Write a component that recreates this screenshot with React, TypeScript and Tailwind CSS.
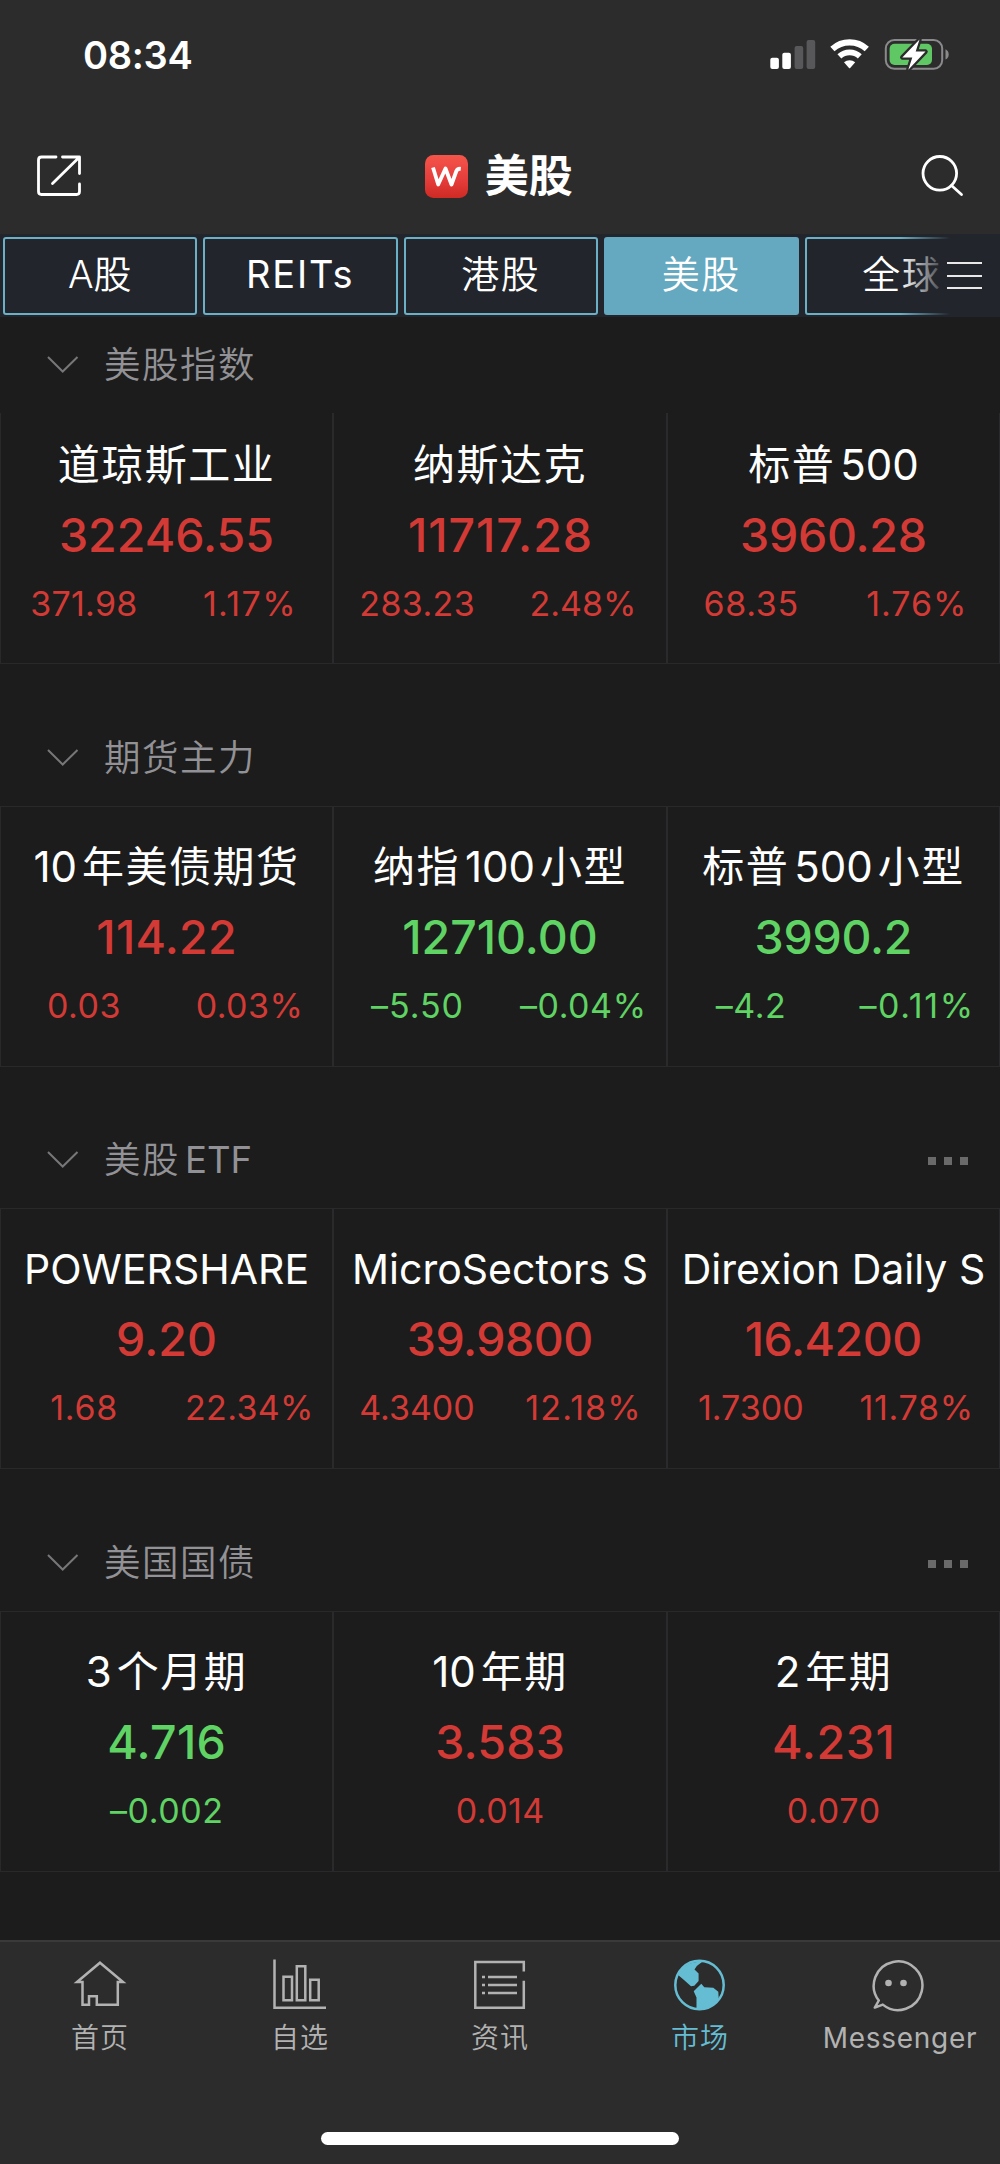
import type { ReactNode } from 'react';

type Figure = [text: string, tracking: number];
type Quote = { name: string; price: Figure; change: Figure; percent?: Figure; up: boolean };
type Group = { title: string; more?: boolean; quotes: Quote[] };

const groups: Group[] = [
  {
    title: '美股指数',
    quotes: [
      { name: '道琼斯工业', price: ['32246.55', 0], change: ['371.98', 0.26], percent: ['1.17%', 1.39], up: true },
      { name: '纳斯达克', price: ['11717.28', 1], change: ['283.23', 0.35], percent: ['2.48%', 0], up: true },
      { name: '标普500', price: ['3960.28', -0.26], change: ['68.35', 0.69], percent: ['1.76%', 0.94], up: true },
    ],
  },
  {
    title: '期货主力',
    quotes: [
      { name: '10年美债期货', price: ['114.22', 0.28], change: ['0.03', 0.44], percent: ['0.03%', 0.43], up: true },
      { name: '纳指100小型', price: ['12710.00', 0], change: ['–5.50', 0.99], percent: ['–0.04%', 0.55], up: false },
      { name: '标普500小型', price: ['3990.2', -0.26], change: ['–4.2', 0.56], percent: ['–0.11%', 1.64], up: false },
    ],
  },
  {
    title: '美股ETF',
    more: true,
    quotes: [
      { name: 'POWERSHARE', price: ['9.20', 0], change: ['1.68', 0.72], percent: ['22.34%', 0.34], up: true },
      { name: 'MicroSectors S', price: ['39.9800', -0.53], change: ['4.3400', 0], percent: ['12.18%', 1.14], up: true },
      { name: 'Direxion Daily S', price: ['16.4200', -0.51], change: ['1.7300', 0], percent: ['11.78%', 0.71], up: true },
    ],
  },
  {
    title: '美国国债',
    more: true,
    quotes: [
      { name: '3个月期', price: ['4.716', 0.31], change: ['–0.002', 0.58], up: false },
      { name: '10年期', price: ['3.583', 0.2], change: ['0.014', 0.43], up: true },
      { name: '2年期', price: ['4.231', 0.66], change: ['0.070', 0.75], up: true },
    ],
  },
];

/** Chinese runs get a little tracking, latin runs a thin gap on each side that touches Chinese. */
function MixedText({ text }: { text: string }) {
  const runs = text.match(/[\u4e00-\u9fff]+|[^\u4e00-\u9fff]+/g) ?? [];
  return (
    <>
      {runs.map((run, i) =>
        /[\u4e00-\u9fff]/.test(run) ? (
          <span key={i} className="tracking-[1.5px]">{run}</span>
        ) : (
          <span key={i} className={'font-normal ' + (i > 0 ? 'ml-[5px] ' : '') + (i < runs.length - 1 ? 'mr-[5px]' : '')}>{run}</span>
        ),
      )}
    </>
  );
}

function Num({ value }: { value: Figure }) {
  return <span style={{ letterSpacing: value[1], marginRight: -value[1] }}>{value[0]}</span>;
}

function StatusBar() {
  return (
    <div className="flex h-[110px] items-center justify-between pr-[50px] pl-[83px]">
      <span className="text-[38px] leading-none font-semibold tracking-[-0.3px]">08:34</span>
      <svg width="180" height="40" viewBox="770 35 180 40" fill="none">
        <rect x="770.3" y="57.7" width="8.6" height="11.3" rx="2" fill="#fff" />
        <rect x="782.3" y="52.7" width="8.6" height="16.3" rx="2" fill="#fff" />
        <rect x="794.6" y="46" width="8.6" height="23" rx="2" fill="#58585a" />
        <rect x="806.6" y="40" width="8.6" height="29" rx="2" fill="#58585a" />
        <path d="M832.4 49.2a25.6 25.6 0 0 1 34.4 0" stroke="#fff" strokeWidth="6.2" transform="translate(0 -.2)" />
        <path d="M839.4 56.8a15.2 15.2 0 0 1 20.4 0" stroke="#fff" strokeWidth="5.8" transform="translate(0 -.4)" />
        <path d="M844 62.3a8.6 8.6 0 0 1 11.2 0l-5 5.7q-.6.6-1.2 0z" fill="#fff" />
        <rect x="885.8" y="40" width="56.4" height="28.8" rx="8.5" stroke="#8a8a8c" strokeWidth="2" />
        <path d="M945.5 49.3q3.2 1.6 3.2 5.1t-3.2 5.1z" fill="#8a8a8c" />
        <rect x="889.6" y="43.8" width="42.4" height="21.2" rx="5" fill="#5fc763" />
        <path
          d="M919.5 39.6 902.3 57.4h10l-4 12.4 17.2-18.2h-9.8z"
          fill="#fff"
          stroke="#2c2c2c"
          strokeWidth="4.5"
          strokeLinejoin="round"
          paintOrder="stroke"
        />
      </svg>
    </div>
  );
}

function TitleBar() {
  return (
    <div className="flex h-[124px] items-center justify-between px-[36px] pt-[8px]">
      <svg width="47" height="44" viewBox="36 154 47 44" fill="none" stroke="#fff" strokeWidth="2.8" strokeLinecap="round" strokeLinejoin="round">
        <path d="M56 157H41.5q-3 0-3 3v31.5q0 3 3 3H76.5q3 0 3-3V184" />
        <path d="M62.5 157H79.5V173.5M52.5 183.5 79 157.5" />
      </svg>
      <div className="ml-[-5px] flex items-center gap-[16.5px]">
        <svg width="43" height="43" viewBox="0 0 43 43" fill="none">
          <defs>
            <linearGradient id="badge" x1="0" y1="0" x2="0" y2="1">
              <stop offset="0" stopColor="#f4554a" />
              <stop offset="0.6" stopColor="#e43c3a" />
              <stop offset="1" stopColor="#cf2a24" />
            </linearGradient>
          </defs>
          <rect width="43" height="43" rx="8.5" fill="url(#badge)" />
          <path d="M8 12.5 13.200 29.500 20.500 13.500 26.500 29.500 31.200 16.500Q32.200 13.500 35.800 13.800" stroke="#fff" strokeWidth="3.800" strokeLinejoin="round" />
        </svg>
        <h1 className="text-[44px] leading-none font-semibold">美股</h1>
      </div>
      <svg width="44" height="44" viewBox="919 154 44 44" fill="none" stroke="#fff" strokeWidth="2.8" strokeLinecap="round">
        <circle cx="938.8" cy="173.3" r="16.8" />
        <path d="M950.5 185.5 960.5 194.5" />
      </svg>
    </div>
  );
}

function MarketTabs() {
  const tabs = ['A股', 'REITs', '港股', '美股', '全球'];
  return (
    <div className="relative flex h-[83px] gap-[6px] overflow-hidden bg-[#22252c] pt-[3px] pl-[2.5px]">
      {tabs.map((tab) => (
        <div
          key={tab}
          className={
            'flex h-[78px] w-[194.5px] shrink-0 items-center justify-center rounded-[3px] border-[2.5px] pb-[4px] text-[38px] whitespace-nowrap ' +
            (tab === '美股' ? 'border-[#64a9c0] bg-[#64a9c0]' : 'border-[#6cb0c6] bg-[#22252c]')
          }
        >
          <span className={tab === 'REITs' ? 'tracking-[1.8px]' : tab === 'A股' ? 'font-[350]' : 'font-[350] tracking-[1.5px]'}>{tab}</span>
        </div>
      ))}
      <div className="absolute inset-y-0 right-0 flex w-[100px] items-center justify-end bg-linear-to-r from-[#22252c]/0 to-[#22252c] to-50% pr-[18px]">
        <div className="flex w-[35px] flex-col gap-[10.5px]">
          <i className="h-[2px] bg-[#e8e8e8]" />
          <i className="h-[2px] bg-[#e8e8e8]" />
          <i className="h-[2px] bg-[#e8e8e8]" />
        </div>
      </div>
    </div>
  );
}

function GroupHeader({ title, more }: { title: string; more?: boolean }) {
  return (
    <div className="flex h-[96px] items-center pr-[32px] pl-[47px]">
      <svg width="32" height="18" viewBox="0 0 32 18" fill="none" stroke="#77777a" strokeWidth="2">
        <path d="M1 1 15.7 15.5 30.5 1" />
      </svg>
      <h2 className="ml-[25px] text-[36.5px] leading-none font-[350] text-[#929296]">
        <MixedText text={title} />
      </h2>
      {more && (
        <div className="mt-[2px] ml-auto flex gap-[8px]">
          <i className="size-[8px] bg-[#6a6a6b]" />
          <i className="size-[8px] bg-[#6a6a6b]" />
          <i className="size-[8px] bg-[#6a6a6b]" />
        </div>
      )}
    </div>
  );
}

function QuoteCell({ quote, latin }: { quote: Quote; latin: boolean }) {
  return (
    <div className="overflow-hidden border-r-2 border-[#2a2a2c] text-center whitespace-nowrap last:border-r">
      <div className={'h-[60px] leading-[60px] text-white ' + (latin ? 'text-[41px]' : 'text-[42px]')}>
        <MixedText text={quote.name} />
      </div>
      <div className={quote.up ? 'text-[#d33a35]' : 'text-[#5fd363]'}>
        <div className="h-[80px] text-[46.5px] leading-[80px] font-medium">
          <Num value={quote.price} />
        </div>
        <div className="flex h-[58px] text-[34px] leading-[58px]">
          <div className="flex-1"><Num value={quote.change} /></div>
          {quote.percent && <div className="flex-1"><Num value={quote.percent} /></div>}
        </div>
      </div>
    </div>
  );
}

const gaps = ['', 'mt-[46px]', 'mt-[45px]', 'mt-[46px]'];

function QuoteGroup({ group, index }: { group: Group; index: number }) {
  const first = index === 0;
  return (
    <section className={gaps[index]}>
      <GroupHeader title={group.title} more={group.more} />
      <div
        className={
          'grid grid-cols-[333px_334px_332px] border-l border-[#29292b] ' +
          (first ? 'h-[251px] border-b *:pt-[22px]' : 'h-[261px] border-y *:pt-[30px]')
        }
      >
        {group.quotes.map((q) => (
          <QuoteCell key={q.name} quote={q} latin={index === 2} />
        ))}
      </div>
    </section>
  );
}

function NavItem({ label, active, children }: { label: string; active?: boolean; children: ReactNode }) {
  const latin = label === 'Messenger';
  return (
    <div className={'flex flex-1 flex-col items-center ' + (active ? 'text-[#65bdd3]' : 'text-[#b2b2b2]')}>
      {children}
      <span className={'mt-[4px] h-[44px] leading-[44px] ' + (latin ? 'text-[28px] tracking-[0.7px]' : 'text-[28px] font-[350] tracking-[1px]')}>{label}</span>
    </div>
  );
}

function BottomNav() {
  const line = { width: 60, height: 58, fill: 'none', stroke: 'currentColor', strokeWidth: 2.5 };
  return (
    <nav className="flex h-[224px] flex-col border-t-2 border-[#3a3a3b] bg-[#2c2c2c]">
      <div className="flex h-[190px] pt-[12px]">
        <NavItem label="首页">
          <svg {...line} viewBox="69.5 1954 60 58">
            <path d="M99.5 1962.7 122.5 1982H117.3V2004.8H96.3V1996.3H88.5V2004.8H82V1982H76.5Z" />
          </svg>
        </NavItem>
        <NavItem label="自选">
          <svg {...line} viewBox="270 1954 60 58">
            <path d="M274.5 1959.5V2007.7H326M283.5 1976.8h8.5v23.4h-8.5zM296.8 1966.3h8.5v33.9h-8.5zM310.2 1979.8h8.5v20.4h-8.5z" />
          </svg>
        </NavItem>
        <NavItem label="资讯">
          <svg {...line} viewBox="470 1954 60 58">
            <path d="M523.8 1971.5V1962H475.3V2007.7H523.8V1980.7" />
            <path d="M482 1977h3M488 1977h29M482 1985h3M488 1985h29M482 1993h3M488 1993h29" />
          </svg>
        </NavItem>
        <NavItem label="市场" active>
          <svg {...line} viewBox="670 1954 60 58">
            <circle cx="699.5" cy="1985" r="24.2" />
            <path
              stroke="none"
              fill="currentColor"
              d="M677.5 1974.5 684 1980 691 1986.3 694.3 1985.7 698.6 1981V1973.500L694.5 1969.5 696.8 1966 702 1962A24.500 24.500 0 0 0 677.5 1974.5ZM693.7 1991.2 701.3 1983.8 704.3 1987.3 713.3 1987.8 718.3 1991.7 718.8 2000A24.500 24.500 0 0 1 696.5 2008.5V1997.5Z"
            />
          </svg>
        </NavItem>
        <NavItem label="Messenger">
          <svg {...line} viewBox="870 1954 60 58" className="relative -left-[4px]">
            <path d="M882.8 2004.6A24.300 24.300 0 1 0 878.800 2000.500L874.800 2007.600Z" transform="translate(4 0)" strokeLinejoin="round" />
            <circle cx="892.5" cy="1983" r="3.3" fill="currentColor" stroke="none" />
            <circle cx="907.5" cy="1983" r="3.3" fill="currentColor" stroke="none" />
          </svg>
        </NavItem>
      </div>
      <div className="mx-auto h-[13px] w-[358px] rounded-full bg-white" />
    </nav>
  );
}

export default function App() {
  return (
    <div className="h-[2164px] overflow-hidden"><div className="flex h-[2164px] w-[1000px] flex-col overflow-hidden bg-[#1c1c1c] font-[Inter,'Noto_Sans_CJK_SC',sans-serif] text-white" style={{ zoom: 1 }}>
      <header className="bg-[#2c2c2c]">
        <StatusBar />
        <TitleBar />
      </header>
      <MarketTabs />
      <main className="flex-1">
        {groups.map((g, i) => (
          <QuoteGroup key={g.title} group={g} index={i} />
        ))}
      </main>
      <BottomNav />
    </div></div>
  );
}
